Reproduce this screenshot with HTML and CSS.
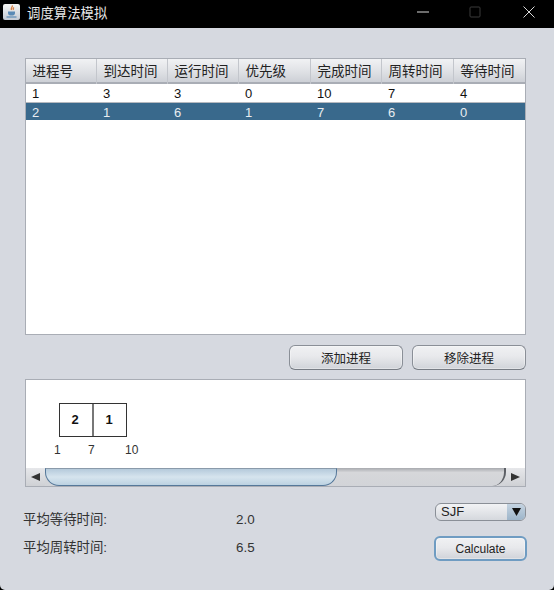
FILE: index.html
```html
<!DOCTYPE html>
<html lang="zh">
<head>
<meta charset="utf-8">
<title>调度算法模拟</title>
<link rel="stylesheet" href="styles.css">
</head>
<body>
<div class="window">
  <header class="titlebar">
    <svg class="app-icon" width="17" height="16" viewBox="0 0 17 16">
      <defs><linearGradient id="ig" x1="0" y1="0" x2="0" y2="1"><stop offset="0" stop-color="#f6f6f4"/><stop offset="1" stop-color="#c3c9d3"/></linearGradient></defs>
      <rect x="0" y="0" width="17" height="16" rx="2" fill="url(#ig)"/>
      <path d="M9 1.500c1.500 1.500-2 2.500-.5 4.500M11 3.500c-1 .8-1.300 1.500-.6 2.500" fill="none" stroke="#d8722c" stroke-width="1.200"/>
      <path d="M5 7.500h7v1.500c0 1.800-1.400 2.600-3.500 2.600S5 10.800 5 9z" fill="#5a8ab5"/>
      <path d="M3.500 13h10" stroke="#5a8ab5" stroke-width="1.200"/>
    </svg>
    <span class="title">调度算法模拟</span>
    <div class="controls">
      <svg class="ctl" width="12" height="12" viewBox="0 0 12 12"><path d="M0 6h12" stroke="#d8d8d8" stroke-width="1"/></svg>
      <svg class="ctl ctl-max" width="12" height="12" viewBox="0 0 12 12"><rect x="1" y="1" width="10" height="10" rx="1" fill="none" stroke="#3a3a3a"/></svg>
      <svg class="ctl" width="12" height="12" viewBox="0 0 12 12"><path d="M.5.500l11 11M11.500.500l-11 11" stroke="#d8d8d8" stroke-width="1"/></svg>
    </div>
  </header>
  <main class="content">
    <section class="table-box">
      <div class="row head">
        <div class="th">进程号</div><div class="th">到达时间</div><div class="th">运行时间</div><div class="th">优先级</div><div class="th">完成时间</div><div class="th">周转时间</div><div class="th">等待时间</div>
      </div>
      <div class="row body"><div class="td">1</div><div class="td">3</div><div class="td">3</div><div class="td">0</div><div class="td">10</div><div class="td">7</div><div class="td">4</div></div>
      <div class="row body selected"><div class="td">2</div><div class="td">1</div><div class="td">6</div><div class="td">1</div><div class="td">7</div><div class="td">6</div><div class="td">0</div></div>
    </section>
    <div class="actions">
      <button class="btn">添加进程</button>
      <button class="btn">移除进程</button>
    </div>
    <section class="gantt-box">
      <div class="gantt">
        <div class="blocks"><div class="block">2</div><div class="block">1</div></div>
        <div class="ticks"><span>1</span><span>7</span><span>10</span></div>
      </div>
      <div class="scrollbar">
        <div class="arrow"><svg width="9" height="8" viewBox="0 0 9 8"><path d="M0 4l9-4v8z" fill="#333"/></svg></div>
        <div class="track">
          <div class="thumb"></div>
        </div>
        <div class="arrow right"><svg width="9" height="8" viewBox="0 0 9 8"><path d="M9 4L0 0v8z" fill="#333"/></svg></div>
      </div>
    </section>
    <section class="footer">
      <div class="stats">
        <div class="stat"><span class="label">平均等待时间:</span><span class="value">2.0</span></div>
        <div class="stat"><span class="label">平均周转时间:</span><span class="value">6.5</span></div>
      </div>
      <div class="side">
        <div class="combo"><span class="combo-text">SJF</span><span class="combo-btn"><svg width="9" height="8" viewBox="0 0 9 8"><path d="M0 0h9L4.500 8z" fill="#111"/></svg></span></div>
        <button class="btn calc">Calculate</button>
      </div>
    </section>
  </main>
</div>
</body>
</html>
```
FILE: styles.css
```css
* { box-sizing: border-box; }
html, body { margin: 0; padding: 0; background: #000; }
.window {
  width: 554px; height: 590px; display: flex; flex-direction: column;
  font-family: "Liberation Sans", "Noto Sans CJK SC", sans-serif; color: #222;
}
.titlebar {
  height: 28px; background: #000; color: #e8e8e8; display: flex; align-items: center;
  padding: 0 0 5px 3px; flex: none;
}
.app-icon { flex: none; margin-right: 7px; }
.title { font-size: 13.4px; }
.controls { margin-left: auto; display: flex; align-items: center; gap: 40px; padding-right: 19px; }
.ctl { display: block; }
.ctl-max { margin-right: 2px; }
.content {
  flex: 1; background: #d6d9e0; padding: 30px 28px 0 25px;
  border-radius: 0 0 5px 5px; display: flex; flex-direction: column;
}
.table-box {
  height: 277px; background: #fff; border: 1px solid #a9adb5; flex: none;
}
.row { display: grid; grid-template-columns: 71px 71px 71px 72px 71px 72px 1fr; }
.head {
  height: 25px; border-bottom: 2px solid #a9adb5;
  background: linear-gradient(#f1f2f4, #dfe1e5 55%, #cdd0d6);
}
.th {
  font-size: 13.5px; padding-left: 6.5px; line-height: 25px; border-right: 1px solid #c3c6cc; color: #222;
}
.th:last-child { border-right: 0; }
.body { height: 19px; font-size: 13px; line-height: 20px; border-bottom: 1px solid #b5b9bf; }
.td { padding-left: 6px; color: #111; }
.selected { background: #39698c; height: 17px; line-height: 19px; border-bottom: 0; }
.selected .td { color: #e8edf1; }
.actions { display: flex; justify-content: flex-end; gap: 9px; margin-top: 10px; flex: none; }
.btn {
  width: 114px; height: 25px; padding: 0; border: 1px solid #8a8f97; border-bottom-color: #777c84; border-radius: 6px;
  font: 12.5px "Liberation Sans", "Noto Sans CJK SC", sans-serif; color: #222;
  background: linear-gradient(#f0f1f3, #e8e9ec 45%, #d0d3d9);
  box-shadow: inset 0 0 0 1px rgba(255,255,255,.35);
}
.gantt-box {
  margin-top: 9px; height: 108px; border: 1px solid #a9adb5; background: #fff; flex: none;
  display: flex; flex-direction: column;
}
.gantt { flex: 1; position: relative; padding: 23px 0 0 33px; }
.blocks { display: flex; width: 68px; height: 34px; border: 1px solid #333; }
.block {
  flex: 1; text-align: center; font-size: 13px; font-weight: bold; line-height: 32px; color: #111; padding-right: 2px;
}
.block + .block { border-left: 2px solid #777; }
.ticks { position: relative; height: 16px; font-size: 12px; color: #333; }
.ticks span { position: absolute; top: 6px; line-height: 14px; }
.ticks span:nth-child(1) { left: -5px; }
.ticks span:nth-child(2) { left: 29px; }
.ticks span:nth-child(3) { left: 66px; }
.scrollbar { height: 18px; display: flex; flex: none; background: linear-gradient(#a8aaaf, #d6d7da 25%, #d2d4d8); }
.arrow { width: 19px; display: flex; align-items: center; justify-content: center; flex: none; background: linear-gradient(#e6e7ea, #cfd1d5); }
.arrow.right { width: 20px; }
.track { flex: 1; position: relative; }
.track::after {
  content: ""; position: absolute; right: -1px; top: 0; bottom: 0; width: 12px;
  border-right: 2px solid #5d6066; border-radius: 0 0 14px 0;
}
.thumb {
  position: absolute; left: 0; top: 0; bottom: 0; width: 292px;
  border: 1px solid #55789a; border-top-color: #8a9aaa; border-radius: 0 0 14px 14px / 0 0 14px 14px;
  background: linear-gradient(#b5cadb, #d6e4ee 50%, #bcd2e2);
}
.footer { display: flex; justify-content: space-between; margin-top: 15px; }
.stats { display: flex; flex-direction: column; gap: 11px; padding-top: 9px; margin-left: -2px; }
.stat { display: flex; font-size: 13.4px; line-height: 17px; height: 17px; color: #333; }
.label { width: 213px; }
.side { display: flex; flex-direction: column; align-items: flex-end; gap: 15px; }
.combo {
  width: 91px; height: 18px; border: 1px solid #8a8f97; border-radius: 6px; display: flex; overflow: hidden; margin-top: 1px;
  background: linear-gradient(#f2f3f5, #d5d8dd);
}
.combo-text { flex: 1; font-size: 13px; line-height: 16px; padding-left: 5px; color: #222; }
.combo-btn { width: 18px; display: flex; align-items: center; justify-content: center; background: linear-gradient(#c4d3e1, #9db5ca); }
.calc { width: 93px; height: 25px; border: 2px solid #6f9cc2; font-size: 12px; margin-right: -1px; }
```
